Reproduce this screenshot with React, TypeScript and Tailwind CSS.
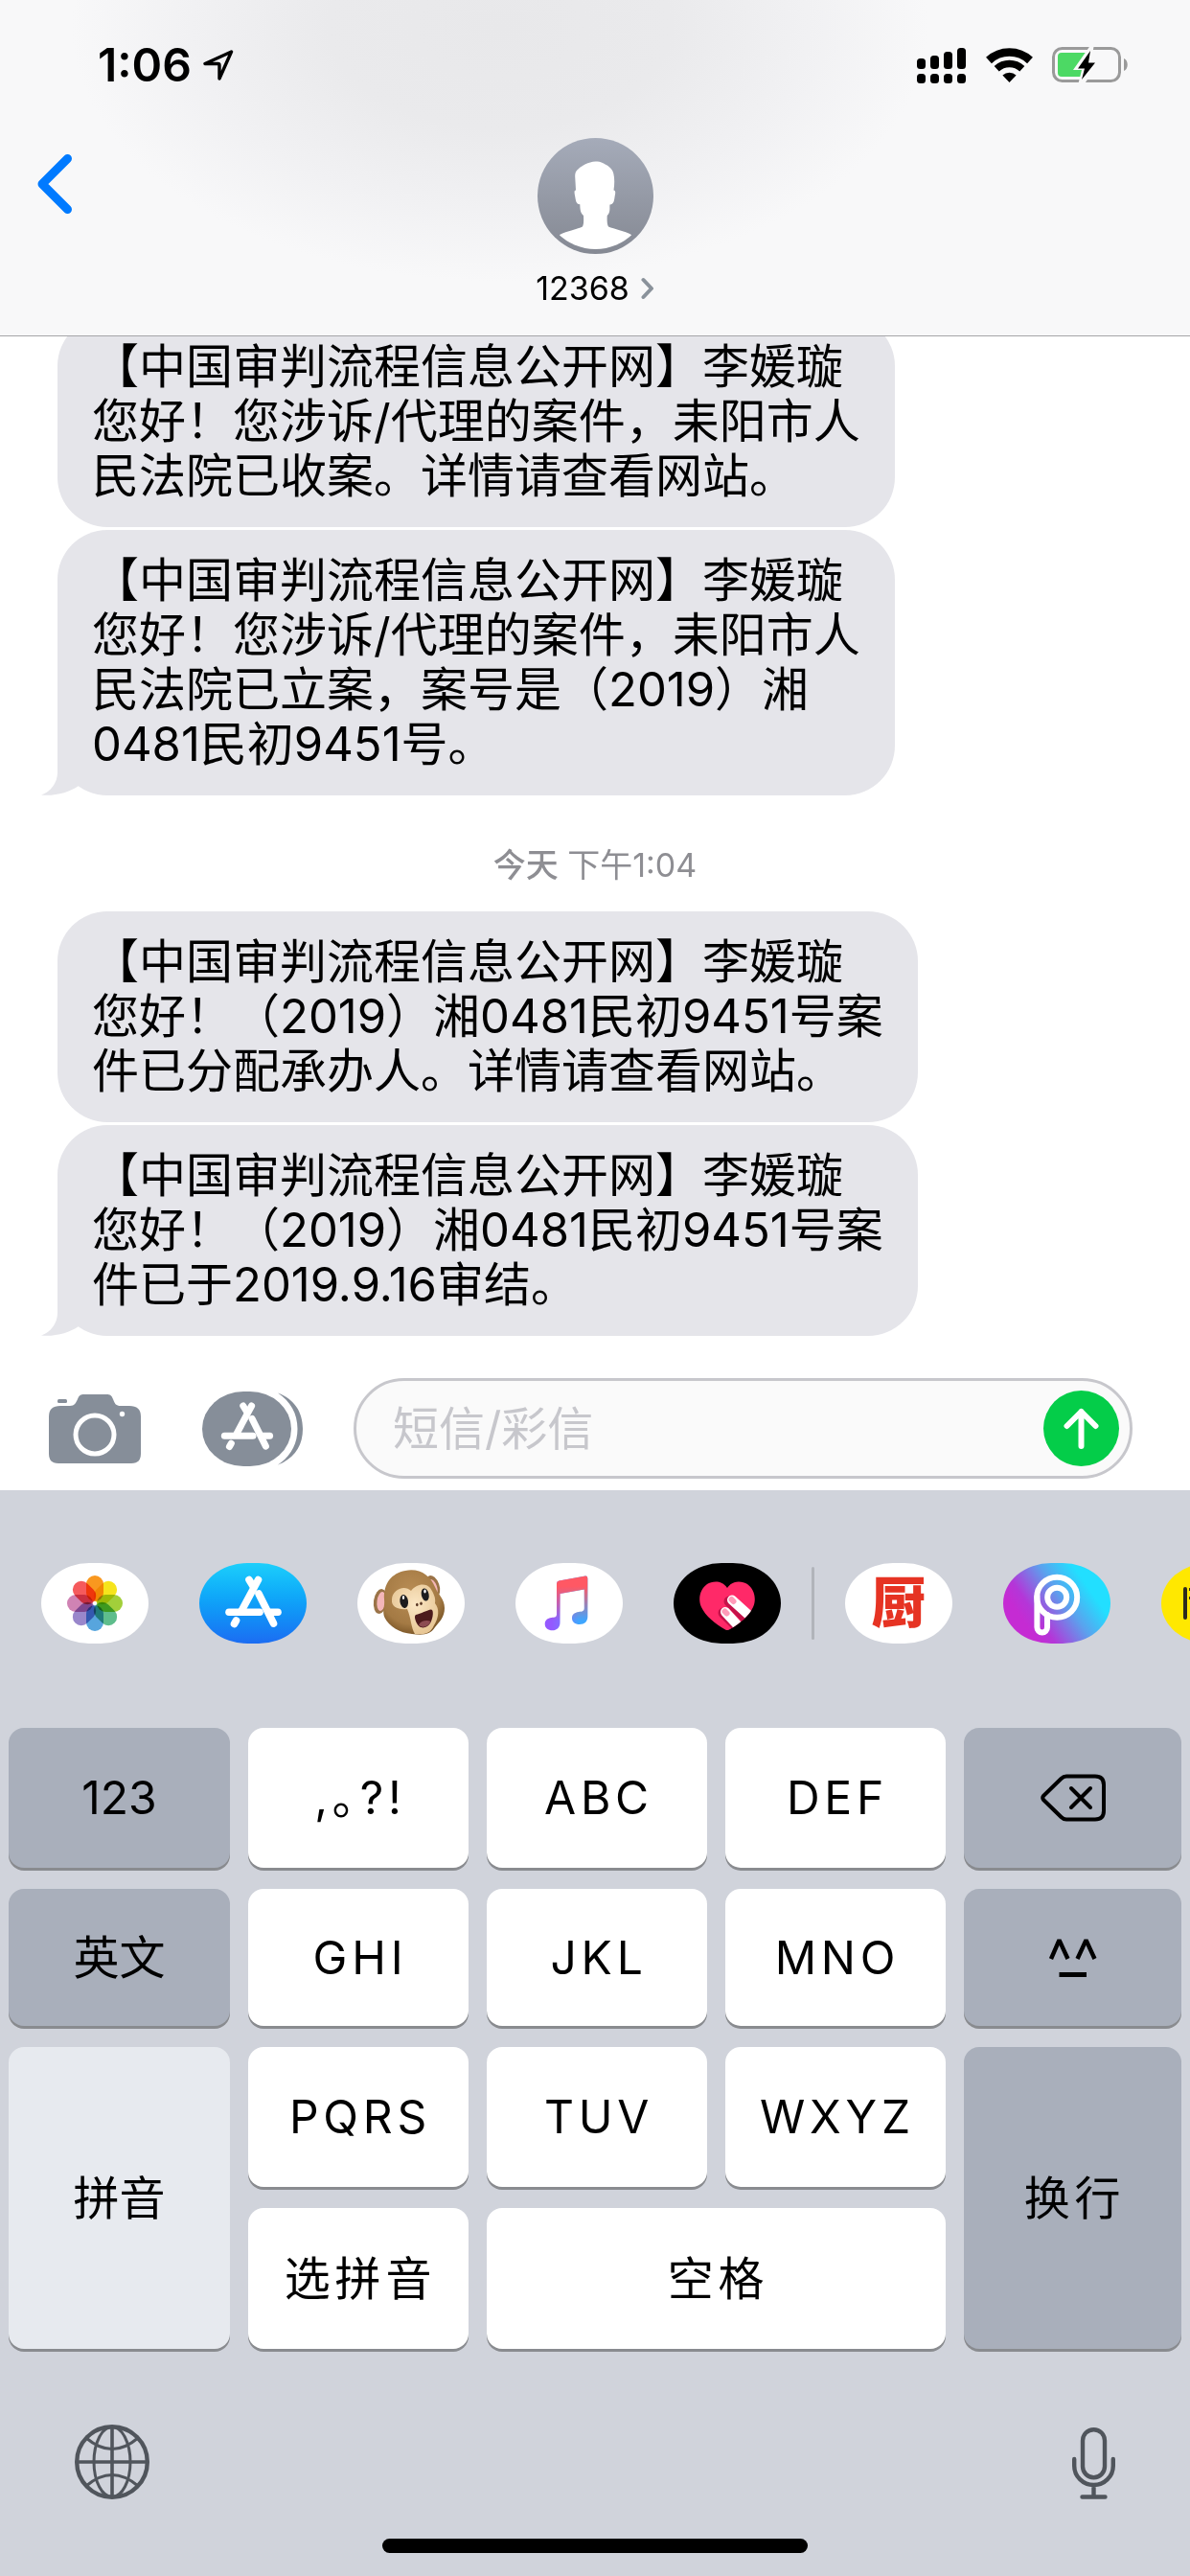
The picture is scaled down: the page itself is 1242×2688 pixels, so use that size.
import { ReactNode, useState } from "react";
import clsx from "clsx";

const StatusIcons = () => {
    return (
        <div className="flex items-center gap-5">
            <svg width="52" height="37" viewBox="0 0 52 37">
                <rect x="0" y="11" width="9" height="11" rx="3.5" />
                <rect x="14" y="8" width="9" height="14" rx="3.5" />
                <rect x="28" y="4" width="9" height="18" rx="3.5" />
                <rect x="42" y="0" width="9" height="22" rx="3.5" />
                <rect x="0" y="27" width="9" height="10" rx="3.5" />
                <rect x="14" y="27" width="9" height="10" rx="3.5" />
                <rect x="28" y="27" width="9" height="10" rx="3.5" />
                <rect x="42" y="27" width="9" height="10" rx="3.5" />
            </svg>
            <svg width="49" height="36" viewBox="0 0 49 36" fill="none" stroke="#000">
                <path d="M3 13 A31.5 31.5 0 0 1 46 13" strokeWidth="8.6" />
                <path d="M11.2 21.7 A19.5 19.5 0 0 1 37.8 21.7" strokeWidth="7.4" />
                <path d="M24.5 36 L17.4 28.6 A10.4 10.4 0 0 1 31.6 28.6 Z" fill="#000" stroke="none" />
            </svg>
            <svg width="80" height="38" viewBox="0 0 80 38">
                <rect x="1.5" y="1.5" width="69" height="34" rx="9" fill="none" stroke="#9a9a9a" strokeWidth="3" />
                <rect x="6" y="6" width="33" height="25" rx="4" fill="#4cd964" />
                <path d="M75 12 C80 14 80 23 75 25 Z" fill="#9a9a9a" />
                <path d="M41 -3 L22 24 H31 L27 40 H33 L50 14 H41 L44 -3 Z" fill="#f9f9f9" />
                <path d="M40 4 L27 22.5 H34 L31 34 L45 16.5 H38 Z" />
            </svg>
        </div>
    );
};

const ContactAvatar = () => {
    return (
        <svg width="121" height="121" viewBox="0 0 121 121">
            <defs>
                <linearGradient id="avatar" x1="0" y1="0" x2="0" y2="1">
                    <stop offset="0" stopColor="#a5abb9" />
                    <stop offset="1" stopColor="#858993" />
                </linearGradient>
                <clipPath id="avatarClip">
                    <circle cx="60.5" cy="60.5" r="55.5" />
                </clipPath>
            </defs>
            <circle cx="60.5" cy="60.5" r="60.5" fill="url(#avatar)" />
            <path
                clipPath="url(#avatarClip)"
                fill="#fff"
                d="M60.5 24.5 C53 25 46 29 43 32 C39 35 39 38 39.3 42 L40 54.5 C38 54.5 38.5 57 39 60 C40 65 40 69 44.3 69.3 C44.5 74 44.5 78 48 81 C48.3 86 48.2 90 47 92.5 C42 95 31 97 23 101 L23 121 H98 V101 C91 97 80 95 74 92.5 C72.5 90 72.5 86 72.7 81 C76.5 77 75 73 75.5 69.5 C80 69 80 65 80.8 60 C81.5 57 81.5 54.5 79.5 54.5 C80.5 48 80.5 42 79.3 37 C77.5 30 72 28.5 69 26.5 C66 24.8 63 24.5 60.5 24.5 Z"
            />
        </svg>
    );
};

const Header = () => {
    return (
        <header className="border-b border-[#a5a5a8] bg-[#f8f8f9] bg-[radial-gradient(ellipse_36%_76%_at_42%_8%,#e8e8ea_0%,#eaeaec_40%,#f1f1f3_72%,transparent_100%)] pb-[29px]">
            <div className="flex h-[92px] items-center justify-between pt-11 pr-16 pl-[102px]">
                <div className="flex items-center gap-3">
                    <span className="text-5xl leading-none font-semibold">1:06</span>
                    <svg width="32" height="34" viewBox="0 0 32 34" fill="none" stroke="#000" strokeWidth="3.4" strokeLinejoin="round">
                        <path d="M29.5 3 L2 15.5 H15.5 Q17 15.5 17 17 V31 Z" />
                    </svg>
                </div>
                <StatusIcons />
            </div>
            <nav className="grid grid-cols-[1fr_auto_1fr] items-start pt-[52px]">
                <button type="button" aria-label="返回" className="mt-4 ml-9 w-fit">
                    <svg width="42" height="64" viewBox="0 0 42 64" fill="none" stroke="#007aff" strokeWidth="9" strokeLinecap="round" strokeLinejoin="round">
                        <path d="M34.5 5.5 L8 32 L34.5 58.5" />
                    </svg>
                </button>
                <button type="button" className="flex flex-col items-center gap-4">
                    <ContactAvatar />
                    <span className="flex items-center gap-3 text-[34px] leading-10">
                        12368
                        <svg width="14" height="24" viewBox="0 0 14 24" fill="none" stroke="#8a929b" strokeWidth="4" strokeLinecap="round" strokeLinejoin="round">
                            <path d="M2.5 3 L11 12 L2.5 21" />
                        </svg>
                    </span>
                </button>
            </nav>
        </header>
    );
};

interface BubbleProps {
    text: string;
    tail?: boolean;
}

const Bubble = ({ text, tail }: BubbleProps) => {
    return (
        <div className="relative w-fit rounded-[52px] bg-[#e5e5ea] px-9 pt-6 pb-[25px]">
            <p className="text-[49px] leading-[57px] whitespace-pre [text-spacing-trim:space-all]">{text}</p>
            {tail && (
                <svg className="absolute bottom-0 -left-[17px]" width="50" height="60" viewBox="0 0 50 60" fill="#e5e5ea">
                    <path d="M17 0 V36 C17 47 10 56 0 59.5 C14 61 29 57 39 50 V0 Z" />
                </svg>
            )}
        </div>
    );
};

const MessageList = () => {
    return (
        <main className="flex min-h-0 flex-1 flex-col justify-end overflow-hidden pl-[60px]">
            <div className="flex flex-col gap-[3px]">
                <Bubble text={"【中国审判流程信息公开网】李媛璇\n您好！您涉诉/代理的案件，耒阳市人\n民法院已收案。详情请查看网站。"} />
                <Bubble text={"【中国审判流程信息公开网】李媛璇\n您好！您涉诉/代理的案件，耒阳市人\n民法院已立案，案号是（2019）湘\n0481民初9451号。"} tail />
            </div>
            <p className="mt-[53px] mb-7 -ml-[60px] text-center text-[34px] leading-10 text-[#8e8e93]">
                <span className="font-medium">今天</span> 下午1:04
            </p>
            <div className="flex flex-col gap-[3px]">
                <Bubble text={"【中国审判流程信息公开网】李媛璇\n您好！（2019）湘0481民初9451号案\n件已分配承办人。详情请查看网站。"} />
                <Bubble text={"【中国审判流程信息公开网】李媛璇\n您好！（2019）湘0481民初9451号案\n件已于2019.9.16审结。"} tail />
            </div>
        </main>
    );
};

// The "A" made of three sticks, shared by the toolbar button and the app strip
const AppStoreGlyph = () => {
    return (
        <g fill="none" stroke="#fff" strokeWidth="7.6" strokeLinecap="round">
            <path d="M61.5 17.5 L44 50" />
            <path d="M52 17.5 L56 24" />
            <path d="M62 32 L77.5 63" />
            <path d="M31 51.3 H63" />
            <path d="M74 51.3 H82" />
            <path d="M38.5 60 L36.5 63.5" />
        </g>
    );
};

const ComposeBar = () => {
    const [message, setMessage] = useState("");

    return (
        <form className="flex items-center bg-white pt-11 pr-[60px] pb-3 pl-[51px]" onSubmit={(e) => e.preventDefault()}>
            <button type="button" aria-label="相机" className="mr-16 shrink-0">
                <svg width="96" height="72" viewBox="0 0 96 72" fill="#868e99">
                    <path d="M12 12 H22 C27 12 28 9 30 5 C31.5 1 33 0 37 0 H60 C64 0 65.5 1 67 5 C69 10 70 12 75 12 H84 Q96 12 96 23 V62 Q96 72 86 72 H10 Q0 72 0 62 V23 Q0 12 12 12 Z" />
                    <rect x="9" y="5" width="10" height="4" rx="1.5" />
                    <circle cx="48" cy="42" r="20" fill="none" stroke="#fff" strokeWidth="5" />
                    <circle cx="76.5" cy="20.5" r="2.7" fill="#fff" />
                </svg>
            </button>
            <button type="button" aria-label="App" className="mr-[53px] shrink-0">
                <svg width="105" height="78" viewBox="0 0 105 78">
                    <path d="M79 1.5 C96 8 105 21 105 39 C105 57 96 70 79 76.5 C92 68 99.5 55 99.5 39 C99.5 23 92 10 79 1.5 Z" fill="#868e99" />
                    <rect x="0" y="0" width="93" height="78" rx="43" ry="39" fill="#868e99" />
                    <g transform="translate(-5.3 -1.2) scale(0.925)">
                        <AppStoreGlyph />
                    </g>
                </svg>
            </button>
            <div className="flex h-[105px] min-w-0 flex-1 items-center rounded-full border-3 border-[#c7c7cc] bg-[#fafafa] pr-[11px] pl-[38px]">
                <input
                    aria-label="短信/彩信"
                    type="text"
                    placeholder="短信/彩信"
                    value={message}
                    onChange={(e) => setMessage(e.target.value)}
                    className="min-w-0 flex-1 bg-transparent text-5xl outline-none placeholder:text-[#c7c7cc]"
                />
                <button type="submit" aria-label="发送" className="flex size-[79px] shrink-0 items-center justify-center rounded-full bg-[#04cd49]">
                    <svg width="37" height="44" viewBox="0 0 37 44" fill="none" stroke="#fff" strokeWidth="6" strokeLinecap="round" strokeLinejoin="round">
                        <path d="M18.5 4 V40 M3.5 19 L18.5 4 L33.5 19" />
                    </svg>
                </button>
            </div>
        </form>
    );
};

interface AppTileProps {
    label: string;
    className?: string;
    children: ReactNode;
}

const AppTile = ({ label, className = "bg-white", children }: AppTileProps) => {
    return (
        <button type="button" aria-label={label} className={clsx("h-[84px] w-[112px] shrink-0 overflow-hidden rounded-[50px_/_42px]", className)}>
            {children}
        </button>
    );
};

const petals = ["#f9981f", "#f6e41c", "#a2cf3a", "#5ebd8c", "#57a5dd", "#9987cb", "#d083b4", "#f55a5c"];

const PhotosIcon = () => {
    return (
        <svg width="112" height="84" viewBox="0 0 112 84">
            <g transform="translate(56 42)">
                {petals.map((color, i) => (
                    <rect key={color} x="-9" y="-29" width="18" height="27" rx="9" fill={color} transform={`rotate(${i * 45})`} className="mix-blend-multiply" />
                ))}
            </g>
        </svg>
    );
};

const MonkeyIcon = () => {
    return (
        <svg width="112" height="84" viewBox="0 0 112 84">
            <defs>
                <radialGradient id="fur" cx="0.45" cy="0.35" r="0.65">
                    <stop offset="0" stopColor="#b98d55" />
                    <stop offset="0.75" stopColor="#a47a44" />
                    <stop offset="1" stopColor="#7d5829" />
                </radialGradient>
                <radialGradient id="muzzle" cx="0.5" cy="0.4" r="0.7">
                    <stop offset="0" stopColor="#fbe7c5" />
                    <stop offset="1" stopColor="#e3c08c" />
                </radialGradient>
            </defs>
            <ellipse cx="24" cy="40" rx="7" ry="13" fill="#9a7347" transform="rotate(8 24 40)" />
            <ellipse cx="25" cy="40" rx="4.5" ry="10" fill="#f4b6b8" transform="rotate(8 25 40)" />
            <ellipse cx="79" cy="24" rx="6.5" ry="11.5" fill="#9a7347" transform="rotate(-20 79 24)" />
            <ellipse cx="79" cy="25" rx="4" ry="8.5" fill="#f4b6b8" transform="rotate(-20 79 25)" />
            <path d="M50 8 C65 5 76 13 81 25 C84 33 91 37 91 47 C91 56 86 61 81 67 C76 75 68 75.5 57 74 C44 73 33 66 28.5 57 C25.5 50 29 45 28 38 C27 21 36 10.500 50 8 Z" fill="url(#fur)" />
            <path d="M56 29 C61 22 71 20 76 26 C80 32 82 37 81 42 C86 48 85 57 80 65 C76 74 70 75 60 74 C56 68 56 57 52 48 C43 49 35 46 36 38 C36 28 49 22 56 29 Z" fill="url(#muzzle)" />
            <ellipse cx="48.7" cy="40" rx="4.3" ry="7" fill="#1c1c1e" transform="rotate(-8 48.7 40)" />
            <ellipse cx="70.7" cy="33" rx="3.9" ry="6.6" fill="#1c1c1e" transform="rotate(-12 70.7 33)" />
            <ellipse cx="48" cy="36" rx="1.2" ry="2" fill="#fff" />
            <ellipse cx="70.5" cy="29.5" rx="1.2" ry="2" fill="#fff" />
            <ellipse cx="62.3" cy="43.5" rx="1.3" ry="1.8" fill="#5b3a26" />
            <ellipse cx="66.5" cy="42.3" rx="1.3" ry="1.8" fill="#5b3a26" />
            <path d="M61 54 C66 53 73 49 77 48.5 C80 49 79 57 76.5 62 C74 67 68 69 64.5 66 C61 63 58.5 55 61 54 Z" fill="#4c1a1c" />
            <path d="M64 64.5 C66 60 73 59 76.5 61 C73.5 67 68 68.5 64 64.5 Z" fill="#8c4c52" />
        </svg>
    );
};

const MusicIcon = () => {
    return (
        <svg width="112" height="84" viewBox="0 0 112 84">
            <defs>
                <linearGradient id="notes" gradientUnits="userSpaceOnUse" x1="31" y1="0" x2="75" y2="0">
                    <stop offset="0.15" stopColor="#9459ff" />
                    <stop offset="0.4" stopColor="#7f72ff" />
                    <stop offset="0.8" stopColor="#3fa6ff" />
                </linearGradient>
                <linearGradient id="beam" gradientUnits="userSpaceOnUse" x1="0" y1="18" x2="0" y2="60">
                    <stop offset="0.15" stopColor="#ff5864" />
                    <stop offset="1" stopColor="#ff5864" stopOpacity="0" />
                </linearGradient>
            </defs>
            {["url(#notes)", "url(#beam)"].map((fill) => (
                <path
                    key={fill}
                    fill={fill}
                    d="M45.5 18.5 L73 13.6 Q75.3 13.4 75.3 16 V56 C75.3 61 72 64 67 64 C62 64 59 61.5 59 57.5 C59 53.5 62 51.5 66 51 C70 50.5 71.8 50.3 71.8 47 V27.5 L46.5 32 V62 C46.5 67.5 43 70.3 38.5 70.3 C34 70.3 30.7 67.5 30.7 63.7 C30.7 59.7 33.5 57.5 37.5 57 C41.5 56.5 43 56.5 43 53 V21.5 Q43 19 45.5 18.5 Z"
                />
            ))}
        </svg>
    );
};

const TouchIcon = () => {
    return (
        <svg width="112" height="84" viewBox="0 0 112 84">
            <defs>
                <clipPath id="heartClip">
                    <path d="M56 26 C62 17 72 19 77 22 C84 27 87 37 83 46 C79 55 68 64 58 69.5 Q56 70.5 54 69.5 C44 64 33 55 29 46 C25 37 28 27 35 22 C40 19 50 17 56 26 Z" />
                </clipPath>
            </defs>
            <g clipPath="url(#heartClip)" strokeLinecap="round">
                <rect width="112" height="84" fill="#ff2968" />
                <path d="M58 40 L82 64" stroke="#c5124a" strokeWidth="11" />
                <path d="M52 52 L76 76" stroke="#c5124a" strokeWidth="11" />
                <path d="M61 38.5 L87 62" stroke="#fff" strokeWidth="10" />
                <path d="M54 51 L76 75" stroke="#fff" strokeWidth="10" />
                <path d="M60.5 38 L62.5 40" stroke="#ff9bb9" strokeWidth="6" />
                <path d="M53.5 50.5 L55.5 52.5" stroke="#ff9bb9" strokeWidth="6" />
            </g>
        </svg>
    );
};

const PicsArtIcon = () => {
    return (
        <svg width="112" height="84" viewBox="0 0 112 84" fill="none" stroke="#fff" strokeWidth="6">
            <circle cx="56.2" cy="35.7" r="21" />
            <circle cx="56.2" cy="35.7" r="10" />
            <path d="M35.4 35 V67 A5.3 5.5 0 0 0 46 67 V54" strokeLinecap="round" />
        </svg>
    );
};

const AppStrip = () => {
    return (
        <div className="flex items-center gap-[53px] overflow-hidden pt-19 pl-[43px]">
            <AppTile label="照片">
                <PhotosIcon />
            </AppTile>
            <AppTile label="App Store" className="bg-linear-to-b from-[#1dcffb] to-[#1c6cf2]">
                <svg width="112" height="84" viewBox="0 0 112 84">
                    <AppStoreGlyph />
                </svg>
            </AppTile>
            <AppTile label="拟我表情">
                <MonkeyIcon />
            </AppTile>
            <AppTile label="音乐">
                <MusicIcon />
            </AppTile>
            <div className="flex shrink-0 items-center gap-8">
                <AppTile label="Digital Touch" className="bg-black">
                    <TouchIcon />
                </AppTile>
                <div className="h-19 w-[3px] rounded-full bg-[#b1b4ba]" />
                <AppTile label="下厨房">
                    <span className="block text-center text-[57px] leading-[84px] font-black text-[#e63323]">厨</span>
                </AppTile>
            </div>
            <AppTile label="PicsArt" className="bg-[linear-gradient(55deg,#c52bd3_22%,#b436d8_32%,#5aa2ee_56%,#22dfff_76%)]">
                <PicsArtIcon />
            </AppTile>
            <AppTile label="更多" className="bg-[#ffe800]">
                <svg width="112" height="84" viewBox="0 0 112 84" fill="#2b2a1e">
                    <rect x="23" y="25" width="4" height="34" rx="2" />
                    <rect x="29" y="26" width="5" height="3" />
                    <rect x="29" y="35" width="5" height="3" />
                </svg>
            </AppTile>
        </div>
    );
};

interface KeyProps {
    label?: string;
    tone?: "white" | "gray" | "light";
    spaced?: boolean;
    className?: string;
    children: ReactNode;
}

const Key = ({ label, tone = "white", spaced, className, children }: KeyProps) => {
    return (
        <button
            type="button"
            aria-label={label}
            className={clsx(
                "flex items-center justify-center rounded-2xl text-5xl shadow-[0_3px_0_#898b8f]",
                tone === "white" && "bg-white",
                tone === "gray" && "bg-[#a9afbb]",
                tone === "light" && "bg-[#e7eaef]",
                spaced && "pl-1 tracking-widest",
                className
            )}
        >
            {children}
        </button>
    );
};

const Keyboard = () => {
    return (
        <div className="mt-[88px] grid grid-cols-[231fr_230fr_230fr_230fr_227fr] grid-rows-[146px_143px_146px_147px] gap-x-[19px] gap-y-[22px] px-[9px]">
            <Key tone="gray">123</Key>
            <Key spaced>,｡?!</Key>
            <Key spaced>ABC</Key>
            <Key spaced>DEF</Key>
            <Key tone="gray" label="删除">
                <svg width="68" height="50" viewBox="0 0 68 50" fill="none" stroke="#000" strokeWidth="4" strokeLinecap="round" strokeLinejoin="round">
                    <path d="M27 2.5 H57 Q66 2.5 66 11.5 V38.5 Q66 47.5 57 47.5 H27 Q24 47.5 21.5 45 L3 27 Q1.5 25 3 23 L21.5 5 Q24 2.5 27 2.5 Z" />
                    <path d="M32 15 L52 35 M52 15 L32 35" />
                </svg>
            </Key>
            <Key tone="gray">英文</Key>
            <Key spaced>GHI</Key>
            <Key spaced>JKL</Key>
            <Key spaced>MNO</Key>
            <Key tone="gray" label="颜文字">
                <svg width="50" height="40" viewBox="0 0 50 40" fill="none" stroke="#000" strokeWidth="4.4">
                    <path d="M2 21 L10.5 1.5 L19.500 21 M29.500 21 L38.500 1.5 L47.500 21" strokeLinejoin="bevel" />
                    <path d="M10.5 37.5 H39" strokeWidth="5" />
                </svg>
            </Key>
            <Key tone="light" className="row-span-2">
                拼音
            </Key>
            <Key spaced>PQRS</Key>
            <Key spaced>TUV</Key>
            <Key spaced>WXYZ</Key>
            <Key tone="gray" spaced className="row-span-2">
                换行
            </Key>
            <Key spaced>选拼音</Key>
            <Key spaced className="col-span-2">
                空格
            </Key>
        </div>
    );
};

const KeyboardFooter = () => {
    return (
        <div className="mt-[79px] flex items-end justify-between px-[78px]">
            <button type="button" aria-label="切换键盘">
                <svg width="78" height="78" viewBox="0 0 78 78" fill="none" stroke="#50555c" strokeWidth="3.6">
                    <circle cx="39" cy="39" r="36.8" strokeWidth="4.4" />
                    <ellipse cx="39" cy="39" rx="19" ry="36.5" strokeWidth="3" />
                    <path d="M39 2 V76 M2 39 H76" />
                    <path d="M12 14 Q39 37 66 14 M12 64 Q39 41 66 64" strokeWidth="3" />
                </svg>
            </button>
            <button type="button" aria-label="听写">
                <svg width="45" height="75" viewBox="0 0 45 75" fill="none" stroke="#50555c" strokeWidth="4.4" strokeLinecap="round">
                    <rect x="11" y="2.2" width="23" height="50" rx="11.5" />
                    <path d="M2.2 33 V40 A20.3 20 0 0 0 42.8 40 V33 M22.5 60 V71 M10.5 72.5 H34.5" />
                </svg>
            </button>
        </div>
    );
};

const App = () => {
    return (
        <div lang="zh-CN" className="flex h-screen flex-col bg-white font-[family-name:Inter,'Noto_Sans_CJK_SC',sans-serif] text-black">
            <Header />
            <MessageList />
            <ComposeBar />
            <section className="bg-[#d0d3db] pb-6">
                <AppStrip />
                <Keyboard />
                <KeyboardFooter />
                <div className="mx-auto mt-[41px] h-[15px] w-[444px] rounded-full bg-black" />
            </section>
        </div>
    );
};

export default App;
